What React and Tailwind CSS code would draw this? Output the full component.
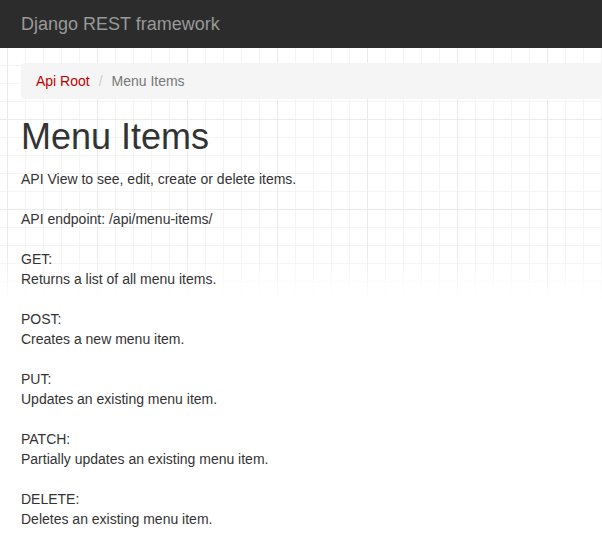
const description = `API View to see, edit, create or delete items.

API endpoint: /api/menu-items/

GET:
Returns a list of all menu items.

POST:
Creates a new menu item.

PUT:
Updates an existing menu item.

PATCH:
Partially updates an existing menu item.

DELETE:
Deletes an existing menu item.`;

const App = () => {
  return (
    <div
      className="min-h-screen overflow-hidden bg-white font-['Liberation_Sans',Arial,sans-serif] text-[#333] [background-image:linear-gradient(to_bottom,rgba(255,255,255,0)_255px,#fff_300px),linear-gradient(to_right,#ebebeb_1px,transparent_1px),linear-gradient(to_bottom,#ebebeb_1px,transparent_1px),linear-gradient(to_right,#f4f4f4_1px,transparent_1px),linear-gradient(to_bottom,#f4f4f4_1px,transparent_1px)] [background-size:100%_100%,90px_100%,100%_90px,18px_100%,100%_18px] [background-position:0_0,7px_0,0_29px,7px_0,0_11px]"
    >
      {/* Navbar */}
      <div className="h-[48px] bg-[#2c2c2c] pl-[21px] pt-[13px]">
        <span className="text-[18px] leading-[20px] text-[#999]">Django REST framework</span>
      </div>

      <div className="pl-[21px]">
        {/* Breadcrumb */}
        <ul className="mr-[-40px] mt-[15px] flex rounded bg-[#f5f5f5] px-[15px] py-2 text-[14px] leading-5">
          <li>
            <a href="#" className="text-[#c20000]">Api Root</a>
          </li>
          <li className="ml-1 text-[#777]">
            <span className="px-[5px] text-[#ccc]">/</span>
            {"\u00a0"}Menu Items
          </li>
        </ul>

        {/* Content */}
        <h1 className="mt-[18px] text-[36px] font-normal leading-[40px] text-[#333]">Menu Items</h1>
        <p className="mt-[12px] whitespace-pre-line text-[14px] leading-5">{description}</p>
      </div>
    </div>
  );
};

export default App;
